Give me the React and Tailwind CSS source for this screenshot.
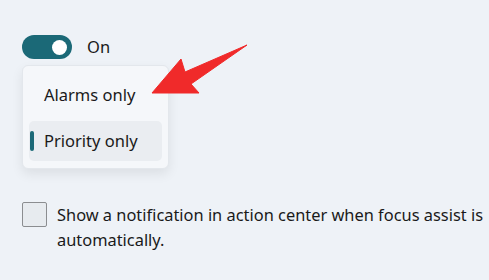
import React from 'react';

const font = { fontFamily: '"Segoe UI", "Noto Sans", "Liberation Sans", sans-serif' };

function Toggle() {
  return (
    <div className="w-[50px] h-[24px] rounded-full bg-[#1b6977] flex items-center justify-end pr-[5px]">
      <div className="w-[15px] h-[15px] rounded-full bg-white" />
    </div>
  );
}

function Arrow() {
  return (
    <svg className="absolute left-0 top-0 pointer-events-none" width="489" height="280" viewBox="0 0 489 280">
      <polygon
        points="152,93 181,59 185,72 247,45 191,84 199,93"
        fill="#f02a2a"
        stroke="#f02a2a"
        strokeWidth="1"
        strokeLinejoin="round"
      />
    </svg>
  );
}

export default function App() {
  return (
    <div className="relative w-[489px] h-[280px] overflow-hidden bg-[#eef2f7] text-[#1a1a1a]" style={font}>
      <div className="pl-[22px] pt-[35px] flex flex-col">
        {/* Focus assist toggle */}
        <div className="flex items-center gap-[15px] h-[24px]">
          <Toggle />
          <span className="text-[16.5px] leading-none">On</span>
        </div>

        {/* Dropdown menu */}
        <div className="mt-[6px] w-[147px] rounded-[6px] bg-[#f5f7fa] border border-[#e3e7ec] shadow-[0_5px_12px_rgba(0,0,0,0.08)] px-[6px] pt-[9px] pb-[7px] flex flex-col gap-[6px]">
          <div className="h-[40px] flex items-center pl-[15px] text-[16.5px]">Alarms only</div>
          <div className="relative h-[40px] flex items-center pl-[15px] text-[16.5px] rounded-[5px] bg-[#eaedf1]">
            <div className="absolute left-[1px] top-[10px] w-[4px] h-[20px] rounded-full bg-[#1b6977]" />
            Priority only
          </div>
        </div>

        {/* Checkbox */}
        <div className="mt-[33px] flex items-start gap-[10px]">
          <div className="w-[25px] h-[25px] shrink-0 rounded-[2px] border border-[#8b8d90] bg-[#e7ebef]" />
          <p className="text-[16.4px] leading-[25px] whitespace-nowrap">
            Show a notification in action center when focus assist is
            <br />
            automatically.
          </p>
        </div>
      </div>
      <Arrow />
    </div>
  );
}
